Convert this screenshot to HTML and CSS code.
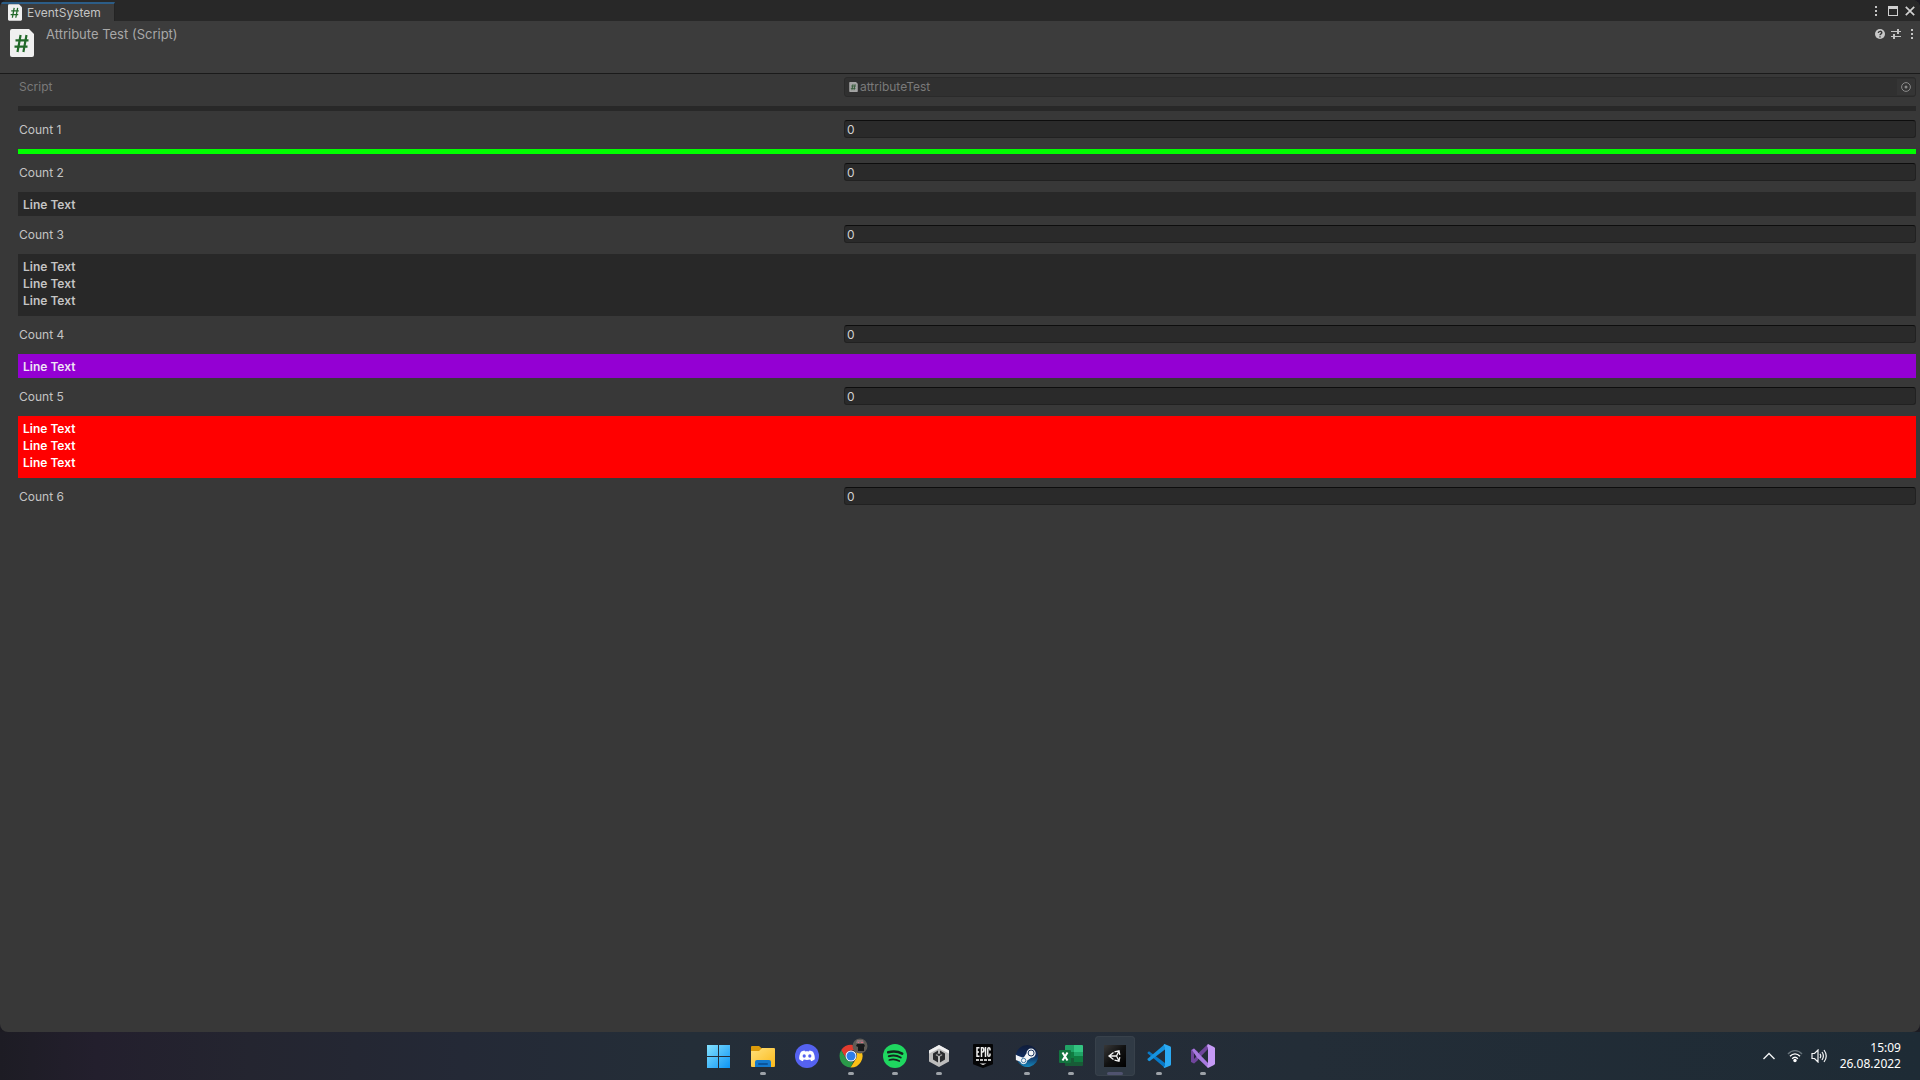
FILE: index.html
```html
<!DOCTYPE html>
<html lang="en">
<head>
<meta charset="utf-8">
<title>EventSystem</title>
<link rel="stylesheet" href="styles.css">
</head>
<body>
<svg class="defs" aria-hidden="true">
  <symbol id="script-icon" viewBox="0 0 24 28">
    <path fill="#f0f0f0" d="M2 0h17l5 5v21a2 2 0 0 1-2 2H2a2 2 0 0 1-2-2V2a2 2 0 0 1 2-2z"/>
    <path fill="none" stroke="#22692a" stroke-width="2.2" d="M10.600 6 7.500 23M16.500 6l-3.100 17M5.500 11.300H18.500M4.500 17.700H17.500"/>
  </symbol>
  <symbol id="dots-icon" viewBox="0 0 4 12">
    <path fill="#c4c4c4" d="M1 1h2v2H1zM1 5h2v2H1zM1 9h2v2H1z"/>
  </symbol>
</svg>

<main class="window">
  <header class="tabbar">
    <button class="tab" type="button"><svg class="tab-icon"><use href="#script-icon"/></svg>EventSystem</button>
    <div class="window-tools">
      <button class="tool" type="button" aria-label="Options"><svg width="4" height="12"><use href="#dots-icon"/></svg></button>
      <button class="tool" type="button" aria-label="Maximize"><svg width="10" height="10" viewBox="0 0 10 10"><path fill="#d0d0d0" fill-rule="evenodd" d="M0 0h10v10H0zM1 3v6h8V3z"/></svg></button>
      <button class="tool" type="button" aria-label="Close"><svg width="10" height="10" viewBox="0 0 10 10"><path stroke="#d0d0d0" stroke-width="1.700" d="m.8.8 8.400 8.400M9.200.8.8 9.200"/></svg></button>
    </div>
  </header>

  <section class="component-header">
    <svg class="component-icon"><use href="#script-icon"/></svg>
    <h1 class="component-title">Attribute Test (Script)</h1>
    <div class="component-tools">
      <button class="tool" type="button" aria-label="Help"><svg width="10" height="10" viewBox="0 0 10 10"><circle cx="5" cy="5" r="5" fill="#c8c8c8"/><path fill="none" stroke="#383838" stroke-width="1.400" d="M3.300 4c0-2.200 3.500-2.200 3.500-.2C6.800 5 5 4.800 5 6.300M5 7.200v1.300"/></svg></button>
      <button class="tool" type="button" aria-label="Presets"><svg width="10" height="10" viewBox="0 0 10 10"><path fill="#c4c4c4" d="M0 2h6v1H0zM6 0h2v5H6zM8 2h2v1H8zM0 7h2v1H0zM2 5h2v5H2zM4 7h6v1H4z"/></svg></button>
      <button class="tool" type="button" aria-label="Component menu"><svg width="4" height="12"><use href="#dots-icon"/></svg></button>
    </div>
  </section>

  <form class="properties">
    <div class="row row-disabled">
      <label for="script">Script</label>
      <div class="object-field">
        <svg class="object-icon"><use href="#script-icon"/></svg>
        <input id="script" type="text" value="attributeTest" disabled>
        <button class="picker" type="button" aria-label="Select script" disabled><svg width="10" height="10" viewBox="0 0 10 10"><circle cx="5" cy="5" r="4.400" fill="none" stroke="#8a8a8a"/><circle cx="5" cy="5" r="1.500" fill="#8a8a8a"/></svg></button>
      </div>
    </div>
    <hr class="line">
    <div class="row"><label for="count1">Count 1</label><input class="field" id="count1" type="text" value="0"></div>
    <hr class="line line-green">
    <div class="row"><label for="count2">Count 2</label><input class="field" id="count2" type="text" value="0"></div>
    <p class="banner">Line Text</p>
    <div class="row"><label for="count3">Count 3</label><input class="field" id="count3" type="text" value="0"></div>
    <p class="banner banner-tall">Line Text<br>Line Text<br>Line Text</p>
    <div class="row"><label for="count4">Count 4</label><input class="field" id="count4" type="text" value="0"></div>
    <p class="banner banner-purple">Line Text</p>
    <div class="row"><label for="count5">Count 5</label><input class="field" id="count5" type="text" value="0"></div>
    <p class="banner banner-tall banner-red">Line Text<br>Line Text<br>Line Text</p>
    <div class="row"><label for="count6">Count 6</label><input class="field" id="count6" type="text" value="0"></div>
  </form>
</main>

<footer class="taskbar">
  <nav class="apps" aria-label="Taskbar">
    <button class="app" type="button" aria-label="Start">
      <svg viewBox="0 0 24 24"><defs><linearGradient id="win" x1="0" y1="0" x2="24" y2="24" gradientUnits="userSpaceOnUse"><stop offset="0" stop-color="#86e3ff"/><stop offset="1" stop-color="#0a93f5"/></linearGradient></defs><path fill="url(#win)" d="M0 1h11v11H0zM12 1h11v11H12zM0 13h11v11H0zM12 13h11v11H12z"/></svg>
    </button>
    <button class="app running" type="button" aria-label="File Explorer">
      <svg viewBox="0 0 24 24"><defs><linearGradient id="folder" x2="1" y2="1"><stop offset="0" stop-color="#ffe17b"/><stop offset="1" stop-color="#fcb91a"/></linearGradient></defs><path fill="#dc9b0b" d="M0 3a1 1 0 0 1 1-1h7l3 2.500L9 8H0z"/><path fill="url(#folder)" d="M0 7h8l3-3h12a1 1 0 0 1 1 1v17a1 1 0 0 1-1 1H1a1 1 0 0 1-1-1z"/><path fill="#1479cc" d="M4 23v-5a2 2 0 0 1 2-2h12a2 2 0 0 1 2 2v5z"/><path fill="#0b559b" d="M8 19h8a1 1 0 0 1 0 2H8a1 1 0 0 1 0-2z"/></svg>
    </button>
    <button class="app" type="button" aria-label="Discord">
      <svg viewBox="0 0 24 24"><circle cx="12" cy="12" r="12" fill="#5562f0"/><path fill="#fff" d="m9.500 6.500.5 1c1.300-.3 2.700-.3 4 0l.5-1c1.300.2 2.500.6 3.500 1.200 1.300 2.200 2 4.800 1.800 7.600-1.200 1-2.400 1.600-3.600 1.900l-1-1.600c-2.100.6-4.300.6-6.400 0l-1 1.600c-1.200-.3-2.400-.9-3.600-1.900C4 12.500 4.700 9.900 6 7.700c1-.6 2.200-1 3.500-1.200z"/><ellipse cx="9.200" cy="12" rx="1.600" ry="1.800" fill="#5562f0"/><ellipse cx="14.800" cy="12" rx="1.600" ry="1.800" fill="#5562f0"/></svg>
    </button>
    <button class="app running" type="button" aria-label="Google Chrome">
      <svg viewBox="0 0 24 24"><path fill="#e33b2e" d="M2.200 6.100a11.500 11.500 0 0 1 19.700.2H12a6 6 0 0 0-5.300 8z"/><path fill="#2a9a49" d="M2.200 6.100 7 14.800a6 6 0 0 0 7.500 2.600L11.500 23.500A11.500 11.500 0 0 1 2.200 6.100z"/><path fill="#fbc116" d="M22 6.300A11.500 11.500 0 0 1 11.500 23.500l5.700-9A6 6 0 0 0 15 6.300z"/><circle cx="12" cy="12" r="5.500" fill="#fff"/><circle cx="12" cy="12" r="4.500" fill="#2d7de8"/></svg>
      <svg class="profile" viewBox="0 0 16 16"><circle cx="8" cy="8" r="7.500" fill="#5f5b56"/><path fill="#8d7478" d="M5 2h6l1 3H4z"/><path fill="#17181a" d="M5 6h7l1 2-1 1v4H6V9L4 8z"/><path fill="#d86c80" d="M6 4h1v1H6zM9 4h2v1H9z"/></svg>
    </button>
    <button class="app running" type="button" aria-label="Spotify">
      <svg viewBox="0 0 24 24"><circle cx="12" cy="12" r="12" fill="#1fd760"/><path fill="none" stroke="#14251d" stroke-linecap="round" stroke-width="2.500" d="M5.200 8.300c5-1.500 10-1 14 1.300"/><path fill="none" stroke="#14251d" stroke-linecap="round" stroke-width="2" d="M5.800 12.300c4.200-1.200 8.300-.8 11.900 1.200"/><path fill="none" stroke="#14251d" stroke-linecap="round" stroke-width="1.700" d="M6.300 16c3.600-1 7-.6 10 1.100"/></svg>
    </button>
    <button class="app running" type="button" aria-label="Unity Hub">
      <svg viewBox="0 0 24 24"><path fill="#bdbdbd" d="m12 1 10 5.500v11L12 23 2 17.500v-11z"/><path fill="#efefef" d="m12 1 10 5.500v3L12 4.500 2 9.500v-3z"/><path fill="#292b2e" d="m11 6.500-5 3v6l5 3v-6l-2.500-1.500L11 9.500zM13 6.500l5 3v6l-5 3v-6l2.500-1.500L13 9.500z"/><path fill="#292b2e" d="m12 9.500 2.500 1.200L12 12l-2.500-1.300z"/></svg>
    </button>
    <button class="app" type="button" aria-label="Epic Games">
      <svg viewBox="0 0 24 24"><path fill="#050506" d="M3 0h18a1 1 0 0 1 1 1v18.500a1 1 0 0 1-.7 1L12 24l-9.300-3.500a1 1 0 0 1-.7-1V1a1 1 0 0 1 1-1z"/><path fill="none" stroke="#f0f0f0" stroke-width="1.500" d="M8.500 3.700H6v8.500h2.500M6 8h2M10.500 13V3.700h1.200c1.500 0 1.500 4.300 0 4.300h-1M14.500 3v10M19 6.500V5c0-1.700-2.200-1.700-2.200 0v6c0 1.700 2.200 1.700 2.200 0V9.500"/><path fill="none" stroke="#c5c5c5" stroke-dasharray="3 1" stroke-width="2" d="M5 16h15"/><path fill="#f0f0f0" d="M8.500 19.500h7L12 21z"/></svg>
    </button>
    <button class="app running" type="button" aria-label="Steam">
      <svg viewBox="0 0 24 24"><defs><linearGradient id="steam" x2="0" y2="1"><stop offset="0" stop-color="#101c39"/><stop offset=".5" stop-color="#102b5b"/><stop offset="1" stop-color="#1587bd"/></linearGradient></defs><path fill="url(#steam)" d="M12.500 1A11 11 0 1 1 2 16l-1-4A11 11 0 0 1 12.500 1z"/><path fill="#f2f4f7" d="m.8 10.800 6.500 2.700 1.600-.3 2.600-4a4.600 4.600 0 1 1 4.700 4.600l-4.200 3a3.500 3.500 0 0 1-6.800 1L.9 16z"/><circle cx="16.100" cy="9" r="3" fill="none" stroke="#15305c" stroke-width="1"/><circle cx="8.600" cy="16.500" r="2.200" fill="none" stroke="#326d9c" stroke-width=".9"/></svg>
    </button>
    <button class="app running" type="button" aria-label="Excel">
      <svg viewBox="0 0 24 24"><path fill="#21a366" d="M7 1h9v7H6V2a1 1 0 0 1 1-1z"/><path fill="#33c481" d="M15 1h8a1 1 0 0 1 1 1v6h-9z"/><path fill="#107c41" d="M6 8h18v7H6z"/><path fill="#21a366" d="M15 8h9v4h-9z"/><path fill="#185c37" d="M6 14h18v7a1 1 0 0 1-1 1H7a1 1 0 0 1-1-1z"/><path fill="#107c41" d="M15 14h9v4h-9z"/><rect y="6" width="12" height="13" rx="1" fill="#12743f"/><path stroke="#fff" stroke-width="2" d="m3.500 8.500 5 8M8.500 8.500l-5 8"/></svg>
    </button>
    <button class="app running active" type="button" aria-label="Unity">
      <svg viewBox="0 0 24 24"><defs><linearGradient id="unity" x2="1" y2="1"><stop offset="0" stop-color="#383838"/><stop offset=".5" stop-color="#111"/><stop offset="1" stop-color="#000"/></linearGradient></defs><path fill="url(#unity)" d="M1 1h22v22H1z"/><path fill="none" stroke="#f2f2f2" stroke-width="1.300" d="M10.500 8.500 6 12l4.500 3.500M11.500 7.800l4.500-1 .8 4M11.500 16.200l4.500 1 .8-4M7 12h6.500l2.500-5M13.500 12l2.500 5"/></svg>
    </button>
    <button class="app running" type="button" aria-label="Visual Studio Code">
      <svg viewBox="0 0 24 24"><path fill="#0879c7" d="M.5 8.500 2 7.300 18 19v5L.8 9.500z"/><path fill="#1693df" d="M.3 15 18 0v5.500L2.500 17.200 1 16.500z"/><path fill="#2baaf3" d="m17.500 0 6 2.500.5 1v17l-.5 1-6 2.500-1-1 1.500-1V3l-1.500-2z"/></svg>
    </button>
    <button class="app running" type="button" aria-label="Visual Studio">
      <svg viewBox="0 0 24 24"><path fill="#70469c" d="m0 6 3-1.500L7 8v8l-4 3.500L0 18z"/><path fill="#25243a" d="M3 9v6l3-3z"/><path fill="#70469c" d="M3 19.500 17 5V0L7 9.500z"/><path fill="#a779de" d="m3 4.500 14 14.500v5L6 13.500 1 6z"/><path fill="#c59af5" d="m17 0 6 3 1 1v16l-1 1-6 3-1-2 1-1V4l-1-2z"/></svg>
    </button>
  </nav>
  <div class="tray">
    <button class="tray-button" type="button" aria-label="Show hidden icons"><svg width="12" height="8" viewBox="0 0 12 8"><path fill="none" stroke="#f3f4f5" stroke-width="1.400" d="m.5 7 5.500-5.500L11.500 7"/></svg></button>
    <button class="tray-button tray-status" type="button" aria-label="Network and volume">
      <svg width="16" height="14" viewBox="0 0 16 14"><g fill="none" stroke-width="1.400"><path stroke="#66727a" d="M1 5c4-4.500 10-4.500 14 0"/><path stroke="#fff" d="M3 7.300c3-3.300 7-3.300 10 0M5.200 9.700c1.700-1.900 3.900-1.900 5.600 0"/></g><circle cx="8" cy="11.500" r="1.700" fill="#fff"/></svg>
      <svg width="17" height="14" viewBox="0 0 17 14"><path fill="none" stroke="#f3f4f5" stroke-width="1.200" d="M1 4.500h2.500L7 1v12L3.500 9.500H1zM9 4.800q1.500 2.200 0 4.400M11 3q2.800 4 0 8M13 1q4.500 6 0 12"/></svg>
    </button>
    <button class="clock" type="button"><time>15:09</time><time datetime="2022-08-26">26.08.2022</time></button>
  </div>
</footer>
</body>
</html>
```
FILE: styles.css
```css
* { box-sizing: border-box; }

body {
  display: flex;
  flex-direction: column;
  min-height: 100vh;
  margin: 0;
  background: #1c1b22;
  color: #c4c4c4;
  font: 12px/18px Inter, "Liberation Sans", sans-serif;
}

button, input {
  min-width: 0;
  margin: 0;
  padding: 0;
  border: 0;
  background: none;
  color: inherit;
  font: inherit;
}

svg { display: block; }

.defs {
  position: absolute;
  width: 0;
  height: 0;
}

.window {
  flex: 1;
  overflow: hidden;
  border-radius: 8px;
  background: #383838;
}

.tabbar {
  display: flex;
  align-items: flex-end;
  justify-content: space-between;
  height: 21px;
  background: #282828;
}

.tab {
  display: flex;
  align-items: center;
  gap: 5px;
  height: 19px;
  padding: 0 13px 0 8px;
  border-top: 2px solid #2c5d87;
  border-right: 1px solid #242424;
  background: #3c3c3c;
  line-height: 17px;
}

.tab-icon {
  width: 14px;
  height: 17px;
}

.window-tools, .component-tools {
  display: flex;
  align-items: center;
}

.window-tools {
  gap: 1px;
  height: 21px;
  padding-right: 2px;
}

.tool {
  display: grid;
  place-items: center;
  width: 16px;
  height: 16px;
}

.component-header {
  display: flex;
  align-items: flex-start;
  height: 53px;
  padding: 4px 0 0 10px;
  border-bottom: 1px solid #1a1a1a;
  background: #3c3c3c;
}

.component-icon {
  width: 24px;
  height: 28px;
  margin-top: 4px;
}

.component-title {
  flex: 1;
  margin: 0 0 0 12px;
  color: #a8a8a8;
  font-size: 13px;
  font-weight: 400;
}

.component-tools { height: 18px; }

.properties {
  padding: 3px 4px 0 18px;
}

.row {
  display: grid;
  grid-template-columns: calc(45vw - 38px) 1fr;
  height: 18px;
}

.row label {
  padding-left: 1px;
  line-height: 20px;
}

.field {
  height: 18px;
  padding: 1px 2px 0;
  border: 1px solid #212121;
  border-top-color: #0d0d0d;
  border-radius: 3px;
  background: #2a2a2a;
  color: #d2d2d2;
}

.row-disabled { color: #7a7a7a; }

.object-field {
  display: flex;
  align-items: center;
  overflow: hidden;
  border: 1px solid #2a2a2a;
  border-radius: 3px;
  background: #303030;
}

.object-field input {
  flex: 1;
  height: 16px;
  padding-left: 2px;
}

.object-icon {
  width: 9px;
  height: 10px;
  margin-left: 4px;
  opacity: 0.6;
}

.picker {
  display: grid;
  place-items: center;
  width: 18px;
  height: 16px;
  background: #353535;
}

.line {
  height: 5px;
  margin: 11px 0 9px;
  border: 0;
  background: #282828;
}

.line-green { background: #00ff00; }

.banner {
  height: 24px;
  margin: 11px 0 9px;
  padding: 4px 5px;
  background: #282828;
  font-weight: 600;
  line-height: 17px;
}

.banner-tall { height: 62px; }

.banner-purple {
  background: #9400d3;
  color: #eee4f4;
}

.banner-red {
  background: #ff0000;
  color: #ffffff;
}

.taskbar {
  display: grid;
  grid-template-columns: 1fr auto 1fr;
  align-items: center;
  height: 48px;
  background: linear-gradient(90deg, #1d1c24 0, #231f2d 5%, #242530 13%, #242936 24%, #242e38 36%, #252c38 50%, #232d37 68%, #1e2b35 100%);
}

.apps {
  display: flex;
  grid-column: 2;
  gap: 4px;
  padding-left: 2px;
}

.app {
  position: relative;
  display: grid;
  place-items: center;
  width: 40px;
  height: 40px;
  border-radius: 4px;
}

.app svg {
  width: 24px;
  height: 24px;
}

.app .profile {
  position: absolute;
  top: 2px;
  right: 3px;
  width: 16px;
  height: 16px;
}

.running::after {
  content: "";
  position: absolute;
  bottom: 1px;
  width: 6px;
  height: 3px;
  border-radius: 2px;
  background: #9da2a8;
}

.active {
  background: #303a45;
  box-shadow: inset 0 0 0 1px #38414b;
}

.active::after {
  width: 16px;
  background: #50536f;
}

.tray {
  display: flex;
  align-items: center;
  justify-content: flex-end;
  gap: 12px;
  padding-right: 19px;
}

.tray-status {
  display: flex;
  align-items: center;
  gap: 8px;
}

.clock {
  display: flex;
  flex-direction: column;
  align-items: flex-end;
  color: #ffffff;
  font: 12px/16px "Noto Sans", sans-serif;
}
```
